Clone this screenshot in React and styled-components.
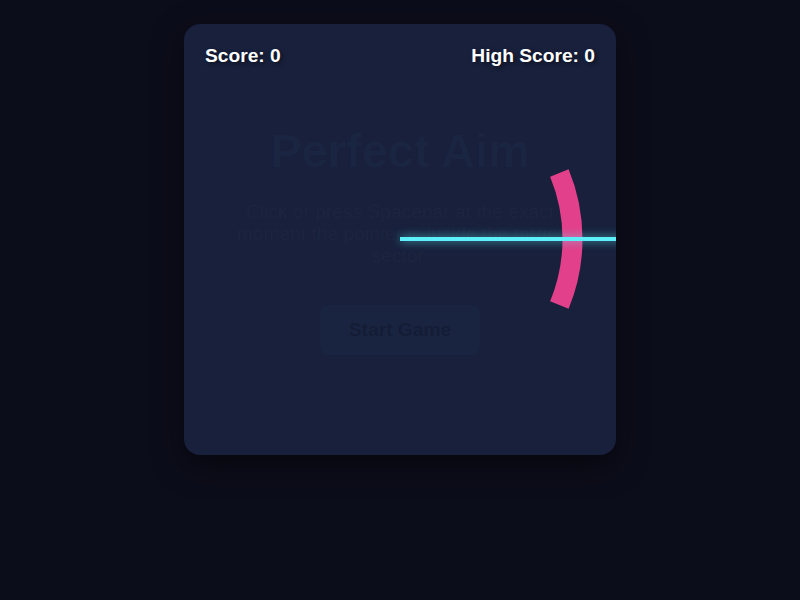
import styled, { createGlobalStyle } from "styled-components";

const GlobalStyle = createGlobalStyle`
  html, body {
    margin: 0;
    padding: 0;
    background: #0c0d1a;
    font-family: "Liberation Sans", Arial, sans-serif;
  }
`;

// sector: centre angle 0 (pointing right), spread 45deg
const CX = 216;
const CY = 215;
const R = 172.5;

function arcPath(from, to) {
  const a = (from * Math.PI) / 180;
  const b = (to * Math.PI) / 180;
  const x1 = CX + R * Math.cos(a);
  const y1 = CY + R * Math.sin(a);
  const x2 = CX + R * Math.cos(b);
  const y2 = CY + R * Math.sin(b);
  return `M ${x1} ${y1} A ${R} ${R} 0 0 1 ${x2} ${y2}`;
}

function App() {
  return (
    <>
      <GlobalStyle />
      <Page>
        <Card>
          <Hud>
            <HudText>Score: 0</HudText>
            <HudText>High Score: 0</HudText>
          </Hud>

          {/* start screen, faded almost out */}
          <Overlay>
            <Title>Perfect Aim</Title>
            <Hint>
              Click or press Spacebar at the exact moment the pointer is inside
              the target sector.
            </Hint>
            <StartButton>Start Game</StartButton>
          </Overlay>

          <Target viewBox="0 0 432 431">
            <path
              d={arcPath(-22.5, 22.5)}
              fill="none"
              stroke="#e2408a"
              strokeWidth="20"
            />
          </Target>
          <Pointer />
        </Card>
      </Page>
    </>
  );
}

const Page = styled.div`
  display: flex;
  justify-content: center;
  padding-top: 24px;
  min-height: 576px;
`;

const Card = styled.div`
  position: relative;
  width: 432px;
  height: 431px;
  background: #18203c;
  border-radius: 16px;
  overflow: hidden;
  box-shadow: 0 10px 30px rgba(0, 0, 0, 0.5);
`;

const Hud = styled.div`
  position: absolute;
  top: 21px;
  left: 21px;
  right: 21px;
  display: flex;
  justify-content: space-between;
  z-index: 3;
`;

const HudText = styled.span`
  color: #ffffff;
  font-size: 19.2px;
  font-weight: bold;
  text-shadow: 2px 2px 4px rgba(0, 0, 0, 0.5);
`;

const Overlay = styled.div`
  position: absolute;
  inset: 0;
  display: flex;
  flex-direction: column;
  align-items: center;
  justify-content: center;
  text-align: center;
  z-index: 1;
`;

const Title = styled.h1`
  margin: 0 0 22px;
  font-size: 47px;
  line-height: 1.15;
  font-weight: bold;
  color: rgba(94, 224, 240, 0.03);
`;

const Hint = styled.p`
  margin: 0 0 38px;
  max-width: 350px;
  font-size: 19.2px;
  line-height: 22px;
  color: rgba(160, 174, 192, 0.04);
`;

const StartButton = styled.button`
  width: 160px;
  height: 50px;
  border: none;
  border-radius: 8px;
  background: rgba(94, 224, 240, 0.025);
  color: rgba(8, 12, 28, 0.3);
  font-family: inherit;
  font-size: 19.2px;
  font-weight: bold;
  cursor: pointer;
`;

const Target = styled.svg`
  position: absolute;
  inset: 0;
  width: 432px;
  height: 431px;
  z-index: 2;
`;

const Pointer = styled.div`
  position: absolute;
  left: 216px;
  top: 213px;
  width: 240px;
  height: 4px;
  background: #5ef0fa;
  box-shadow: 0 0 10px rgba(94, 240, 250, 0.7);
  z-index: 2;
`;

export default App;
